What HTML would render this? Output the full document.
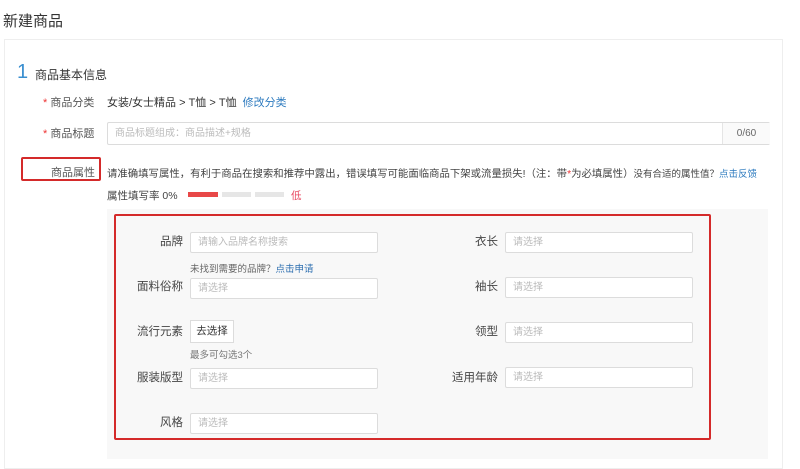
<!DOCTYPE html>
<html><head><meta charset="utf-8"><style>
body{margin:0;width:800px;height:449px;background:#fff;position:relative;overflow:hidden;font-family:"Liberation Sans","Noto Sans CJK SC",sans-serif;color:#333}
.a{position:absolute;white-space:nowrap}
.inp{position:absolute;background:#fff;border:1px solid #dcdcdc;border-radius:2px;box-sizing:border-box;height:21px;font-size:10px;color:#bbb;padding-left:7px;line-height:19px}
.l{position:absolute;font-size:11.5px;color:#444;text-align:right;width:80px;line-height:14px}
</style></head><body>
<div class="a" style="left:3px;top:10px;font-size:15px;color:#333">新建商品</div>
<div class="a" style="left:4px;top:39px;width:779px;height:430px;border:1px solid #eee;box-sizing:border-box"></div>
<div class="a" style="left:17px;top:61px;font-size:20px;color:#3a8fd0">1</div>
<div class="a" style="left:35px;top:66px;font-size:12px;color:#333">商品基本信息</div>
<div class="a" style="left:43px;top:94px;font-size:11px;color:#555"><span style="color:#e33">*</span> 商品分类</div>
<div class="a" style="left:107px;top:94px;font-size:11px;color:#333">女装/女士精品 &gt; T恤 &gt; T恤 <span style="color:#2e7bbf;margin-left:3px">修改分类</span></div>
<div class="a" style="left:43px;top:125px;font-size:11px;color:#555"><span style="color:#e33">*</span> 商品标题</div>
<div class="inp" style="left:107px;top:122px;width:663px;height:23px;line-height:21px">商品标题组成：商品描述+规格</div>
<div class="a" style="left:722px;top:123px;width:47px;height:21px;border-left:1px solid #e5e5e5;background:#fafafa;font-size:10px;color:#666;text-align:center;line-height:21px">0/60</div>
<div class="a" style="left:21px;top:157px;width:80px;height:24px;border:2px solid #d42a2a;border-radius:2px;box-sizing:border-box"></div>
<div class="a" style="left:51px;top:164px;font-size:11px;color:#555">商品属性</div>
<div class="a" style="left:107px;top:165px;font-size:10.4px;color:#444">请准确填写属性，有利于商品在搜索和推荐中露出，错误填写可能面临商品下架或流量损失!（注：带<span style="color:#e33">*</span>为必填属性）<span style="font-size:9.5px">没有合适的属性值？</span><span style="color:#2e7bbf;font-size:9.5px">点击反馈</span></div>
<div class="a" style="left:107px;top:188px;font-size:10.5px;color:#444">属性填写率 0%</div>
<div class="a" style="left:188px;top:192px;width:30px;height:5px;background:#e84848"></div>
<div class="a" style="left:222px;top:192px;width:29px;height:5px;background:#e6e6e6"></div>
<div class="a" style="left:255px;top:192px;width:29px;height:5px;background:#e6e6e6"></div>
<div class="a" style="left:291px;top:188px;font-size:10.5px;color:#e84860">低</div>
<div class="a" style="left:107px;top:209px;width:661px;height:250px;background:#f8f8f8"></div>
<div class="a" style="left:114px;top:214px;width:597px;height:226px;border:2px solid #d42a2a;border-radius:2px;box-sizing:border-box"></div>
<div class="l" style="left:103px;top:235px">品牌</div>
<div class="inp" style="left:190px;top:232px;width:188px">请输入品牌名称搜索</div>
<div class="a" style="left:190px;top:261px;font-size:9.5px;color:#666">未找到需要的品牌？<span style="color:#2e6fb0">点击申请</span></div>
<div class="l" style="left:103px;top:280px">面料俗称</div>
<div class="inp" style="left:190px;top:278px;width:188px">请选择</div>
<div class="l" style="left:103px;top:325px">流行元素</div>
<div class="a" style="left:190px;top:320px;width:44px;height:23px;background:#fff;border:1px solid #dcdcdc;box-sizing:border-box;font-size:10.5px;color:#333;text-align:center;line-height:21px">去选择</div>
<div class="a" style="left:190px;top:347px;font-size:9.5px;color:#777">最多可勾选3个</div>
<div class="l" style="left:103px;top:371px">服装版型</div>
<div class="inp" style="left:190px;top:368px;width:188px">请选择</div>
<div class="l" style="left:103px;top:416px">风格</div>
<div class="inp" style="left:190px;top:413px;width:188px">请选择</div>
<div class="l" style="left:418px;top:235px">衣长</div>
<div class="inp" style="left:505px;top:232px;width:188px">请选择</div>
<div class="l" style="left:418px;top:280px">袖长</div>
<div class="inp" style="left:505px;top:277px;width:188px">请选择</div>
<div class="l" style="left:418px;top:325px">领型</div>
<div class="inp" style="left:505px;top:322px;width:188px">请选择</div>
<div class="l" style="left:418px;top:371px">适用年龄</div>
<div class="inp" style="left:505px;top:367px;width:188px">请选择</div>
</body></html>
